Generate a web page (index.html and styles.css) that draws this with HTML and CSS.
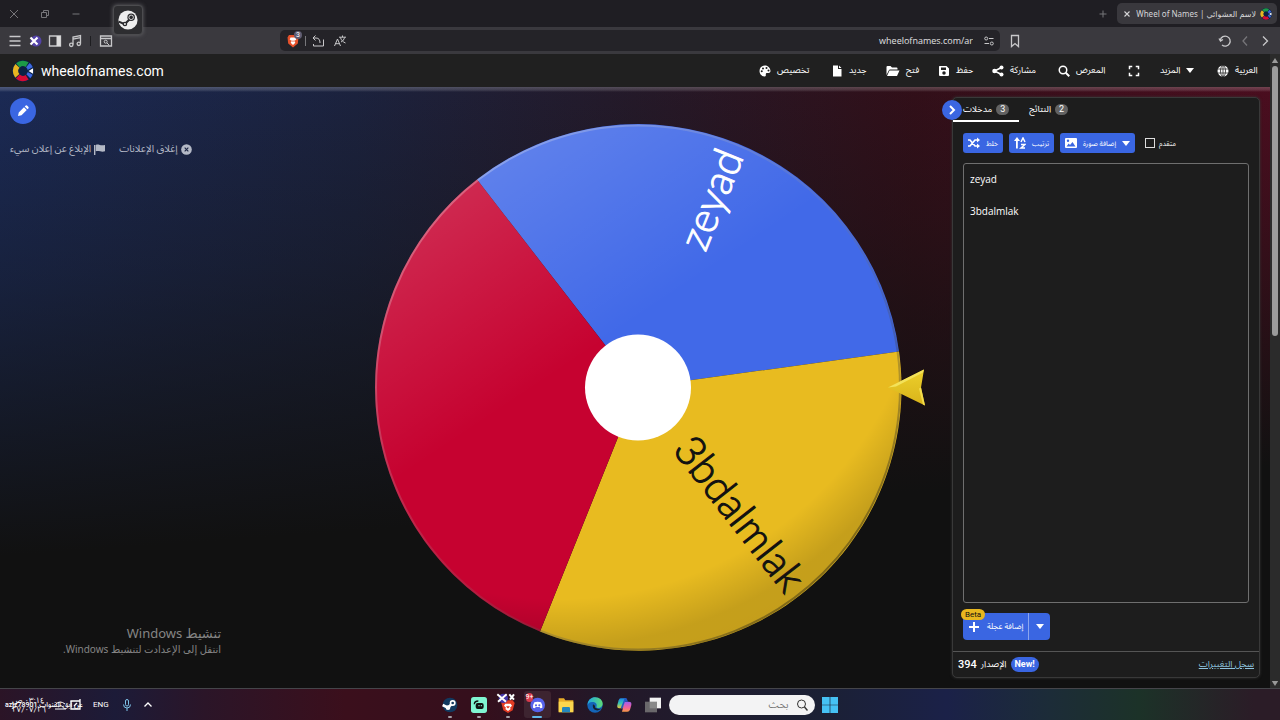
FILE: index.html
```html
<!DOCTYPE html>
<html lang="ar" dir="ltr">
<head>
    <meta charset="UTF-8">
    <meta name="viewport" content="width=device-width, initial-scale=1.0">
    <title>Wheel of Names | عجلة الاسم العشوائي</title>
    <link rel="stylesheet" href="styles.css">
</head>
<body>
    <!-- tab strip -->
    <header class="tabstrip">
        <div class="window-buttons">
            <button aria-label="Close"><svg class="icon" viewBox="0 0 12 12"><path d="M2 2l8 8M10 2l-8 8" class="line"/></svg></button>
            <button aria-label="Restore"><svg class="icon" viewBox="0 0 12 12"><path d="M2.500 4.500h5v5h-5zM4.500 4.500v-2h5v5h-2" class="line"/></svg></button>
            <button aria-label="Minimize"><svg class="icon" viewBox="0 0 12 12"><path d="M2.500 6h7" class="line"/></svg></button>
        </div>
        <div class="tabs-right">
            <button class="new-tab" aria-label="New tab"><svg class="icon" viewBox="0 0 12 12"><path d="M6 2.500v7M2.500 6h7" class="line"/></svg></button>
            <div class="browser-tab">
                <button aria-label="Close tab"><svg class="icon small" viewBox="0 0 12 12"><path d="M3 3l6 6M9 3l-6 6" class="line bold"/></svg></button>
                <span class="tab-title">Wheel of Names | <bdi>لاسم العشوائي</bdi></span>
                <svg class="icon" viewBox="0 0 24 24"><use href="#logo"/></svg>
            </div>
        </div>
    </header>

    <!-- browser toolbar -->
    <div class="toolbar">
        <div class="toolbar-left">
            <button aria-label="Menu"><svg class="icon big" viewBox="0 0 14 14"><path d="M1.500 2.500h11M1.500 7h11M1.500 11.500h11" class="line bold"/></svg></button>
            <button aria-label="Extension"><svg class="icon big" viewBox="0 0 14 14"><circle cx="8" cy="7" r="5.500" fill="#5443a8"/><path d="M2.500 3.500l7 7M2.500 10.500l7-7" stroke="#fff" stroke-width="2.200"/></svg></button>
            <button aria-label="Sidebar"><svg class="icon big" viewBox="0 0 14 14"><path d="M1.500 2h11v10h-11z" class="line bold"/><path d="M8.500 2h4v10h-4z" fill="#ddd"/></svg></button>
            <button aria-label="Music"><svg class="icon big" viewBox="0 0 14 14"><path d="M5 10.500V3l7.500-1.500v8M5 5.200l7.500-1.500" class="line bold"/><circle cx="3.300" cy="10.800" r="1.700" class="line bold"/><circle cx="10.800" cy="9.800" r="1.700" class="line bold"/></svg></button>
            <span class="divider"></span>
            <button aria-label="Search tabs"><svg class="icon big" viewBox="0 0 14 14"><path d="M1.500 2h11v10h-11zM1.500 4.500h11" class="line bold"/><circle cx="6.700" cy="7.700" r="1.500" class="line"/><path d="M8 9l2 2" class="line"/></svg></button>
        </div>
        <div class="address">
            <button class="shield" aria-label="Shields">
                <svg class="icon big" viewBox="0 0 14 14"><path d="M3 1h7l2.500 2.500-.7 6L7 13.500 2.200 9.500l-.7-6z" fill="#e5512b"/><path d="M4.500 3.500h5l.8 2-2 1.500 1 1.800L7 11 4.700 8.800l1-1.800-2-1.500z" fill="#fff"/><path d="M6 6.500l1 1 1-1" stroke="#e5512b" fill="none"/></svg>
                <span class="shield-count">3</span>
            </button>
            <span class="divider light"></span>
            <button aria-label="Share page"><svg class="icon big" viewBox="0 0 14 14"><path d="M4.500 1.500L2 4l2.500 2.500M2.500 4h2.500c3 0 4 2 4 5M12.500 5.500v6.500h-10v-2" class="line"/></svg></button>
            <button class="translate" aria-label="Translate"><svg class="icon big" viewBox="0 0 14 14"><path d="M1.500 12l3-7 3 7M2.500 9.700h4M6 3.200h7M9.500 1.500v1.700M7.500 3.500c.5 2.500 2.500 4.500 5 5.500M11.500 3.500c-.5 2-1.500 3.500-3.500 4.500" class="line"/></svg></button>
            <input class="url" type="text" aria-label="Address" value="wheelofnames.com/ar" readonly>
            <button aria-label="Site settings"><svg class="icon" viewBox="0 0 12 12"><circle cx="3.200" cy="3.500" r="1.500" class="line"/><path d="M6 3.500h4.500M1.500 8.500H6" class="line"/><circle cx="8.800" cy="8.500" r="1.500" class="line"/></svg></button>
        </div>
        <div class="toolbar-right">
            <button aria-label="Bookmark"><svg class="icon big" viewBox="0 0 14 14"><path d="M3.500 1.500h7v11L7 9.500l-3.500 3z" class="line bold"/></svg></button>
            <div class="history">
                <button aria-label="Reload"><svg class="icon big" viewBox="0 0 14 14"><path d="M2.300 6A5 5 0 1 1 4 11M1 4.500L2.500 7 5 5.500" class="line bold"/></svg></button>
                <button class="dim" aria-label="Forward"><svg class="icon big" viewBox="0 0 14 14"><path d="M9 2.500L5 7l4 4.500" class="line bold"/></svg></button>
                <button aria-label="Back"><svg class="icon big" viewBox="0 0 14 14"><path d="M5 2.500L9.500 7 5 11.500" class="line bold"/></svg></button>
            </div>
        </div>
    </div>
    <div class="steam-overlay"><svg viewBox="0 0 24 24"><use href="#steam"/></svg></div>

    <div class="page">
        <div class="content">
            <nav class="site-nav">
                <a class="brand" href="#"><svg viewBox="0 0 24 24"><use href="#logo"/></svg>wheelofnames.com</a>
                <div class="menu">
                    <button><svg class="icon" viewBox="0 0 24 24"><path fill-rule="evenodd" d="M12 1C5.500 1 1 6 1 12s5 11 10 11c2 0 3-1.500 2.700-3-.5-2.500.5-4 2.800-4H19c2.500 0 4-1.500 4-4C23 6 18 1 12 1zM5.500 10.500a2 2 0 1 1 0 4 2 2 0 0 1 0-4zM8 5a2 2 0 1 1 0 4 2 2 0 0 1 0-4zm7-1a2 2 0 1 1 0 4 2 2 0 0 1 0-4zm4 5a2 2 0 1 1 0 4 2 2 0 0 1 0-4z"/></svg>تخصيص</button>
                    <button><svg class="icon" viewBox="0 0 24 24"><path d="M4 1h10v7h7v15H4zM16 1l5 5h-5z"/></svg>جديد</button>
                    <button><svg class="icon wide" viewBox="0 0 28 24"><path d="M1 20V4q0-2 2-2h6l3 3h9q2 0 2 2v2H8q-1.500 0-2.500 2zM2 22l5-11h20l-5 11z"/></svg>فتح</button>
                    <button><svg class="icon" viewBox="0 0 24 24"><path fill-rule="evenodd" d="M3 2h14l5 5v13q0 2-2 2H4q-2 0-2-2V4q0-2 1-2zM6 5v5h10V5zM12 12.500a3.500 3.500 0 1 0 0 7 3.500 3.500 0 0 0 0-7z"/></svg>حفظ</button>
                    <button><svg class="icon" viewBox="0 0 24 24"><circle cx="5" cy="12" r="4.500"/><circle cx="19" cy="5" r="4"/><circle cx="19" cy="19" r="4"/><path d="M19 5L5 12l14 7" fill="none" stroke="#fff" stroke-width="3"/></svg>مشاركة</button>
                    <button><svg class="icon" viewBox="0 0 24 24"><circle cx="10" cy="10" r="7.500" fill="none" stroke="#fff" stroke-width="3"/><path d="M15.500 15.500l7 7" stroke="#fff" stroke-width="4"/></svg>المعرض</button>
                    <button aria-label="ملء الشاشة"><svg class="icon" viewBox="0 0 24 24"><path d="M3 8.500V3h5.500M15.500 3H21v5.500M21 15.500V21h-5.500M8.500 21H3v-5.500" fill="none" stroke="#fff" stroke-width="3"/></svg></button>
                    <button>المزيد<svg class="caret" viewBox="0 0 10 6"><path d="M0 0h10L5 6z"/></svg></button>
                    <button><svg class="icon" viewBox="0 0 24 24"><circle cx="12" cy="12" r="11"/><path d="M1 8h22M1 16h22M12 1v22" stroke="#202020" stroke-width="1.500"/><ellipse cx="12" cy="12" rx="5" ry="11" fill="none" stroke="#202020" stroke-width="1.500"/></svg>العربية</button>
                </div>
            </nav>

            <main class="stage">
                <section class="left">
                    <button class="edit" aria-label="تعديل"><svg viewBox="0 0 24 24"><path d="M2 22l1.500-7L14 4.500l5.500 5.500L9 20.500zM15.500 3l2-2q1.500-1 3 .5l2 2q1.500 1.500.5 3l-2 2z"/></svg></button>
                    <div class="ad-links">
                        <a href="#">الإبلاغ عن إعلان سيء<svg class="icon" viewBox="0 0 12 12"><path d="M0 1h1.500v11H0zM2 1c3-1.500 5 1.500 10 0v7c-4 1.500-6-1-10 0z"/></svg></a>
                        <a href="#">إغلاق الإعلانات<svg class="icon" viewBox="0 0 12 12"><circle cx="6" cy="6" r="5.800"/><path d="M4 4l4 4M8 4L4 8" stroke="#1b2442" stroke-width="1.200"/></svg></a>
                    </div>
                    <div class="activate" dir="rtl">
                        <p class="activate-title">تنشيط Windows</p>
                        <p>انتقل إلى الإعدادت لتنشيط Windows.</p>
                    </div>
                </section>

                <svg class="wheel" viewBox="0 0 580 600" role="img" aria-label="zeyad, 3bdalmlak">
                    <defs>
                        <linearGradient id="shine" x1="0.200" y1="0.050" x2="0.800" y2="0.950">
                            <stop offset="0" stop-color="#fff" stop-opacity=".17"/>
                            <stop offset=".4" stop-color="#fff" stop-opacity="0"/>
                        </linearGradient>
                        <radialGradient id="shade" cx="0.350" cy="0.200" r="0.900">
                            <stop offset=".78" stop-color="#000" stop-opacity="0"/>
                            <stop offset=".88" stop-color="#000" stop-opacity=".15"/>
                            <stop offset="1" stop-color="#000" stop-opacity=".16"/>
                        </radialGradient>
                        <linearGradient id="rim" x1="0" y1="0" x2="1" y2="1">
                            <stop offset=".1" stop-color="#fff" stop-opacity=".3"/>
                            <stop offset=".5" stop-color="#888" stop-opacity=".2"/>
                            <stop offset=".9" stop-color="#000" stop-opacity=".4"/>
                        </linearGradient>
                        <linearGradient id="gold" x1="0" y1="0" x2="0" y2="1">
                            <stop offset="0" stop-color="#ecd02c"/>
                            <stop offset="1" stop-color="#d9b31a"/>
                        </linearGradient>
                    </defs>
                    <g transform="translate(293 300)">
                        <path d="M0 0L-161 -208A263 263 0 0 1 261 -36z" fill="#4169e8"/>
                        <path d="M0 0L261 -36A263 263 0 0 1 -98 244z" fill="#e8bb20"/>
                        <path d="M0 0L-98 244A263 263 0 0 1 -161 -208z" fill="#c60230"/>
                        <circle r="263" fill="url(#shine)"/>
                        <circle r="263" fill="url(#shade)"/>
                        <circle r="262" fill="none" stroke="url(#rim)" stroke-width="2"/>
                        <text class="slice light" transform="rotate(-68)" x="254" y="12">zeyad</text>
                        <text class="slice dark" transform="rotate(52)" x="254" y="12">3bdalmlak</text>
                        <circle r="53" fill="#fff"/>
                        <path d="M250 0L286 -18L283 0L287 18z" fill="url(#gold)"/>
                        <path d="M250 0L286 -18L285 -15L258 -1z" fill="#f3e25a"/>
                        <path d="M283 0l4 18-2-1-4-16z" fill="#f3dd4d"/>
                    </g>
                </svg>

                <section class="right">
                    <aside class="panel">
                        <button class="collapse" aria-label="إخفاء"><svg class="icon" viewBox="0 0 12 12"><path d="M4 2l4 4-4 4" class="line thick"/></svg></button>
                        <div class="panel-tabs">
                            <button class="active">مدخلات<span class="count">3</span></button>
                            <button>النتائج<span class="count">2</span></button>
                        </div>
                        <div class="panel-body">
                            <div class="tools">
                                <button class="btn"><svg class="icon" viewBox="0 0 12 12"><path d="M0 3h2l5 6h3M0 9h2l5-6h3" fill="none" stroke="#fff" stroke-width="1.600"/><path d="M9 .500L12 3 9 5.500zM9 6.500L12 9l-3 2.500z"/></svg>خلط</button>
                                <button class="btn"><svg class="icon" viewBox="0 0 12 12"><path d="M2 4h1.800v7.500H2zM3 0L0 4h6z"/><path d="M7 5l2-4 2 4M7 7.500h4l-4 3.500h4" fill="none" stroke="#fff" stroke-width="1.500"/></svg>ترتيب</button>
                                <button class="btn"><svg class="icon" viewBox="0 0 12 12"><path fill-rule="evenodd" d="M1 1h10q1 0 1 1v8q0 1-1 1H1q-1 0-1-1V2q0-1 1-1zM1.500 9.500h9L7.500 5 5 8 3.700 6.500zM3 2.500a1.200 1.200 0 1 0 0 2.400 1.200 1.200 0 0 0 0-2.400z"/></svg>إضافة صورة<svg class="caret" viewBox="0 0 10 6"><path d="M0 0h10L5 6z"/></svg></button>
                                <label class="advanced"><input type="checkbox">متقدم</label>
                            </div>
                            <textarea class="entries" aria-label="مدخلات" spellcheck="false">zeyad

3bdalmlak</textarea>
                            <div class="add-wheel">
                                <button class="add"><svg class="icon" viewBox="0 0 12 12"><path d="M6 1v10M1 6h10" class="line thick"/></svg>إضافة عجلة</button>
                                <button class="more" aria-label="المزيد"><svg class="caret" viewBox="0 0 10 6"><path d="M0 0h10L5 6z"/></svg></button>
                                <span class="beta">Beta</span>
                            </div>
                        </div>
                        <footer class="version">
                            <b>394</b><span class="version-word">الإصدار</span><span class="new">New!</span>
                            <a href="#">سجل التغييرات</a>
                        </footer>
                    </aside>
                </section>
            </main>
        </div>
        <div class="scrollbar">
            <svg viewBox="0 0 10 6"><path d="M5 0l4 6H1z"/></svg>
            <span class="thumb"></span>
            <svg viewBox="0 0 10 6"><path d="M1 0h8L5 6z"/></svg>
        </div>
    </div>

    <!-- taskbar -->
    <div class="taskbar">
        <div class="tray">
            <div class="clock">
                <span>٠٣:١٤ ص</span>
                <span>٢٧/٠٧/٢٦</span>
                <span class="caption">azjz78901 <bdi>عن آبق القنوات</bdi></span>
                <svg class="tray-icons" viewBox="0 0 30 12"><path d="M2 5q4-4 9 0M4 8q3-3 5 0M1 10h11" class="line"/><path d="M17 2h9v8h-9zM20 7l3-3M26 0v4" class="line bold"/></svg>
            </div>
            <span class="lang">ENG</span>
            <svg class="icon" viewBox="0 0 12 12"><rect x="4.500" y="0.500" width="3" height="6.500" rx="1.500" fill="none" stroke="#7fc4ea"/><path d="M2.500 5.500q0 3.500 3.500 3.500t3.500-3.500M6 9v3" fill="none" stroke="#7fc4ea"/></svg>
            <button aria-label="Hidden icons"><svg class="icon" viewBox="0 0 12 12"><path d="M2.500 7.500L6 4l3.500 3.500" class="line bold"/></svg></button>
        </div>
        <div class="apps">
            <button class="app open" aria-label="Steam"><svg viewBox="0 0 24 24"><circle cx="12" cy="12" r="11" fill="#12395f"/><path d="M1 12l8 4 6-6" stroke="#fff" stroke-width="4" fill="none"/><circle cx="16" cy="9" r="4.500" fill="#fff"/><circle cx="16" cy="9" r="2" fill="#12395f"/><circle cx="9" cy="16" r="3.500" fill="#fff"/></svg></button>
            <button class="app open" aria-label="Streamlabs"><svg viewBox="0 0 24 24"><rect width="24" height="24" rx="4" fill="#80f5d2"/><path d="M5 11q0-5 6-5" fill="none" stroke="#111" stroke-width="2"/><rect x="7" y="9" width="12" height="9" rx="3" fill="#111"/><path d="M12 12v2M15.500 12v2" stroke="#80f5d2" stroke-width="1.600"/></svg></button>
            <button class="app open" aria-label="Brave"><svg viewBox="0 0 24 24"><path d="M5 5h14l3 4-3 11-7 4-7-4L2 9z" fill="#e33b24"/><path d="M8 10h8l2 3-3 3 1 2-4 3-4-3 1-2-3-3z" fill="#fff"/><path d="M10 14l2 2 2-2" stroke="#e33b24" stroke-width="2" fill="none"/><circle cx="5" cy="2" r="7" fill="#4436a8"/><path d="M-4 -4l13 11M-3 7L10 -4M14 -4l7 8M21 -4l-6 8" stroke="#fff" stroke-width="3"/></svg></button>
            <button class="app open current" aria-label="Discord"><svg viewBox="0 0 24 24"><circle cx="13" cy="12" r="11" fill="#5662ea"/><path d="M8 8q5-2 10 0 2.500 4 2 8l-3 1-1-2h-6l-1 2-3-1q-.5-4 2-8z" fill="#fff"/><circle cx="10.500" cy="12.500" r="1.600" fill="#5662ea"/><circle cx="15.500" cy="12.500" r="1.600" fill="#5662ea"/></svg><span class="unread">9+</span></button>
            <button class="app" aria-label="File Explorer"><svg viewBox="0 0 24 24"><path d="M1 2h8l2 3h12v17H1z" fill="#e9ad28"/><path d="M1 7h22v16H1z" fill="#fbd64e"/><path d="M6 23v-6q0-2 2-2h8q2 0 2 2v6z" fill="#2386bd"/></svg></button>
            <button class="app" aria-label="Edge"><svg viewBox="0 0 24 24"><defs><linearGradient id="edge"><stop offset="0" stop-color="#20a8e0"/><stop offset="1" stop-color="#5edb76"/></linearGradient></defs><circle cx="12" cy="12" r="11.500" fill="#1465b8"/><path d="M1 10C2 4 7 .500 12 .500c7 0 12 5 11.500 10.500-.5 4-4 6-7.500 5.500-2.500-.5-2-2-1.500-3.500C15 9 11 7 7.500 7.500 4 8 2 9 1 12z" fill="url(#edge)"/><path d="M9 11q-2 7 5 9 4 1 8-3-4 2-8 0-3-1-2-4z" fill="#17212d"/></svg></button>
            <button class="app" aria-label="Copilot"><svg viewBox="0 0 24 24"><defs><linearGradient id="cop1" x2="0" y2="1"><stop offset="0" stop-color="#1e86e8"/><stop offset=".5" stop-color="#37c5b0"/><stop offset="1" stop-color="#f5c635"/></linearGradient><linearGradient id="cop2" x2="0" y2="1"><stop offset="0" stop-color="#a35cf0"/><stop offset=".6" stop-color="#f2619a"/><stop offset="1" stop-color="#f79a45"/></linearGradient></defs><path d="M7 2h8l-4 15H5q-4 0-3-5l2-7q1-3 3-3z" fill="url(#cop1)"/><path d="M13 7h6q5 0 4 5l-2 7q-1 3-4 3H9z" fill="url(#cop2)"/><path d="M13 2h3l2 5h-5l-3 10H7z" fill="#2457c5"/></svg></button>
            <button class="app" aria-label="Task view"><svg viewBox="0 0 24 24"><path d="M7 1h17v16H7z" fill="#f2f2f2"/><path d="M0 7h18v16H0z" fill="#777" opacity=".85"/></svg></button>
            <label class="search">
                <input type="text" placeholder="بحث" aria-label="بحث" dir="rtl">
                <svg class="icon" viewBox="0 0 12 12"><circle cx="5.500" cy="5" r="4" fill="none" stroke="#333"/><path d="M8.500 8l3 3.500" stroke="#333" stroke-width="1.400"/></svg>
            </label>
            <button class="app start" aria-label="Start"><svg viewBox="0 0 24 24"><path d="M0 0h11.500v11.500H0zM12.500 0H24v11.500H12.500zM0 12.500h11.500V24H0zM12.500 12.500H24V24H12.500z" fill="#45c1f3"/></svg></button>
        </div>
    </div>

    <svg class="symbols" aria-hidden="true">
        <symbol id="logo" viewBox="0 0 24 24">
            <circle cx="12" cy="12" r="12" fill="#0c2144"/>
            <g fill="none" stroke-width="6">
                <path d="M6.500 5.900A8.200 8.200 0 0 1 16.500 5.100" stroke="#1c9b48"/>
                <path d="M5.800 17.300A8.200 8.200 0 0 1 6 6.500" stroke="#e8b521"/>
                <path d="M16.500 18.800A8.200 8.200 0 0 1 6.300 17.900" stroke="#d50b35"/>
                <path d="M17.300 5.700A8.200 8.200 0 0 1 17.800 17.800" stroke="#3d68e0"/>
            </g>
            <path d="M15 12l9-5v10z" fill="#0c2144"/>
            <path d="M18 12l5-3v6z" fill="#fff"/>
        </symbol>
        <symbol id="steam" viewBox="0 0 24 24">
            <circle cx="12" cy="12" r="11.500" fill="#eee"/>
            <path d="M1 14l7 3 6-6" fill="none" stroke="#2a2a2d" stroke-width="2.500"/>
            <circle cx="15.800" cy="8.800" r="4.500" fill="#2a2a2d"/>
            <circle cx="15.800" cy="8.800" r="2.700" fill="none" stroke="#eee"/>
            <circle cx="8.300" cy="16.800" r="2.800" fill="#2a2a2d"/>
            <circle cx="8.300" cy="16.800" r="1.200" fill="#eee"/>
        </symbol>
    </svg>
</body>
</html>
```
FILE: styles.css
```css
* {
    box-sizing: border-box;
}
body {
    margin: 0;
    height: 100vh;
    display: flex;
    flex-direction: column;
    overflow: hidden;
    background: #111;
    color: #fff;
    font-family: Roboto, "Noto Sans Arabic", "DejaVu Sans", sans-serif;
    font-size: 10px;
}
button {
    display: flex;
    align-items: center;
    justify-content: center;
    padding: 0;
    border: none;
    background: none;
    color: inherit;
    font: inherit;
    white-space: nowrap;
    cursor: pointer;
}
a {
    color: inherit;
    text-decoration: none;
}
svg {
    display: block;
    flex-shrink: 0;
    fill: currentColor;
}
.symbols {
    position: absolute;
    width: 0;
    height: 0;
}
.icon {
    width: 12px;
    height: 12px;
}
.icon.small {
    width: 10px;
    height: 10px;
}
.icon.big {
    width: 14px;
    height: 14px;
}
.icon.wide {
    width: 14px;
}
.caret {
    width: 8px;
    height: 5px;
}
.line {
    fill: none;
    stroke: currentColor;
}
.line.bold {
    stroke-width: 1.3;
}
.line.thick {
    stroke-width: 2;
}

/* browser */
.tabstrip {
    display: flex;
    justify-content: space-between;
    height: 27px;
    padding: 0 3px 0 8px;
    background: #1f1e23;
    color: #77767a;
}
.window-buttons {
    display: flex;
    gap: 19px;
}
.tabs-right {
    display: flex;
    align-items: center;
    gap: 8px;
}
.browser-tab {
    display: flex;
    align-items: center;
    gap: 4px;
    height: 21px;
    padding: 0 5px;
    border-radius: 5px;
    background: #39383d;
    color: #d5d5d7;
}
.tab-title {
    min-width: 116px;
    white-space: nowrap;
    font-family: "Noto Sans", "DejaVu Sans", sans-serif;
    font-size: 8px;
}
.toolbar {
    display: grid;
    grid-template-columns: 280px 1fr 280px;
    align-items: center;
    height: 27px;
    background: #3a393e;
    color: #c8c8ca;
}
.toolbar-left {
    display: flex;
    align-items: center;
    gap: 6px;
    padding-left: 8px;
}
.divider {
    width: 1px;
    height: 10px;
    margin: 0 2px;
    background: #1d1d20;
}
.divider.light {
    margin: 0 1px;
    background: #77777b;
}
.address {
    display: flex;
    align-items: center;
    gap: 4px;
    height: 21px;
    padding: 0 5px 0 6px;
    border-radius: 5px;
    background: #242328;
}
.shield {
    position: relative;
}
.shield-count {
    position: absolute;
    top: -3px;
    right: -2px;
    padding: 0 2px;
    border-radius: 4px;
    background: #5e5d72;
    color: #fff;
    font-size: 7px;
    line-height: 8px;
}
.translate {
    margin-left: 4px;
}
.url {
    flex: 1;
    min-width: 0;
    padding: 0;
    border: none;
    background: none;
    color: #e0e0e2;
    font-family: "Open Sans", sans-serif;
    font-size: 9px;
    text-align: right;
}
.address button:last-child {
    margin: 0 0 0 6px;
}
.toolbar-right {
    display: flex;
    justify-content: space-between;
    padding: 0 8px;
}
.history {
    display: flex;
    gap: 6px;
}
.dim {
    color: #77767a;
}
.steam-overlay {
    position: absolute;
    left: 113px;
    top: 5px;
    padding: 4px;
    border: 1px solid #4c4c4f;
    border-radius: 4px;
    background: #2d2d30;
    box-shadow: 0 0 4px #66666a;
}
.steam-overlay svg {
    width: 20px;
    height: 20px;
}

/* page */
.page {
    flex: 1;
    min-height: 0;
    display: flex;
}
.content {
    flex: 1;
    min-width: 0;
    display: flex;
    flex-direction: column;
}
.scrollbar {
    display: flex;
    flex-direction: column;
    align-items: center;
    gap: 3px;
    width: 10px;
    padding: 4px 0 2px;
    background: #2b2b2b;
    color: #999;
}
.scrollbar svg {
    width: 8px;
    height: 5px;
}
.scrollbar svg:last-child {
    margin-top: auto;
}
.thumb {
    width: 6px;
    height: 43%;
    border-radius: 3px;
    background: #9b9b9b;
}
.site-nav {
    display: flex;
    align-items: center;
    justify-content: space-between;
    height: 33px;
    padding: 0 8px 0 12px;
    background: #202020;
}
.brand {
    display: flex;
    align-items: center;
    gap: 7px;
    font-size: 14px;
}
.brand svg {
    width: 22px;
    height: 22px;
}
.menu {
    display: grid;
    grid-template-columns: 72px 55px 52px 54px 66px 70px 32px 57px 45px;
}
.menu button {
    justify-content: flex-start;
    gap: 6px;
    font-size: 9px;
}
.stage {
    flex: 1;
    min-height: 0;
    display: grid;
    grid-template-columns: 1fr 580px 1fr;
    grid-template-rows: 100%;
    background:
        linear-gradient(180deg, rgba(255, 255, 255, .22) 0, rgba(255, 255, 255, .14) 3px, rgba(255, 255, 255, 0) 5px),
        linear-gradient(176deg, rgba(17, 17, 17, 0) 0, rgba(17, 17, 17, .35) 28%, #111 68%),
        linear-gradient(90deg, #1b2a55, #1c2340 28%, #261a2b 50%, #360f1a 72%, #560d22);
}
.left {
    display: flex;
    flex-direction: column;
    align-items: flex-start;
    padding: 11px 10px 32px;
}
.edit {
    width: 26px;
    height: 26px;
    border-radius: 50%;
    background: #3a66e2;
}
.edit svg {
    width: 12px;
    height: 12px;
}
.ad-links {
    display: flex;
    gap: 14px;
    margin-top: 18px;
    color: #b4b9c6;
    font-size: 10px;
}
.ad-links a {
    display: flex;
    align-items: center;
    gap: 3px;
    line-height: 14px;
    white-space: nowrap;
}
.ad-links .icon {
    width: 11px;
    height: 11px;
}
.activate {
    width: 211px;
    margin-top: auto;
    color: #858585;
    font-family: "Noto Sans", "DejaVu Sans", sans-serif;
    white-space: nowrap;
}
.activate p {
    margin: 0;
    line-height: 14px;
}
.activate .activate-title {
    font-size: 13px;
    line-height: 18px;
}
.wheel {
    width: 100%;
    height: 100%;
    overflow: visible;
}
.slice {
    font-family: Lato, sans-serif;
    font-size: 42px;
    font-weight: 300;
    text-anchor: end;
}
.slice.light {
    fill: #fff;
    stroke: #fff;
}
.slice.dark {
    fill: #111;
    stroke: #111;
}
.right {
    display: flex;
    justify-content: flex-end;
    padding: 10px 10px 10px 0;
}
.panel {
    position: relative;
    display: flex;
    flex-direction: column;
    width: 308px;
    border: 1px solid #393939;
    border-radius: 5px;
    background: #1d1d1d;
    box-shadow: 0 0 3px #333;
}
.collapse {
    position: absolute;
    left: -11px;
    top: 2px;
    width: 20px;
    height: 20px;
    border-radius: 50%;
    background: #3a66e2;
}
.panel-tabs {
    display: flex;
    height: 24px;
}
.panel-tabs button {
    gap: 4px;
    padding: 0 10px;
    border-bottom: 2px solid transparent;
    font-size: 9px;
}
.panel-tabs .active {
    border-color: #fff;
}
.count {
    padding: 0 4px;
    border-radius: 6px;
    background: #626262;
    font-size: 9px;
    line-height: 11px;
}
.panel-body {
    flex: 1;
    min-height: 0;
    display: flex;
    flex-direction: column;
    gap: 10px;
    padding: 11px 10px;
}
.tools {
    display: flex;
    gap: 6px;
    height: 20px;
}
.btn {
    gap: 6px;
    padding: 0 5px;
    border-radius: 3px;
    background: #3a66e2;
    font-size: 7px;
}
.advanced {
    display: flex;
    align-items: center;
    gap: 4px;
    margin-left: 4px;
    font-size: 7px;
}
.advanced input {
    width: 10px;
    height: 10px;
    margin: 0;
    border: 1px solid #ddd;
    appearance: none;
}
.entries {
    flex: 1;
    padding: 7px 6px;
    border: 1px solid #6f6f6f;
    border-radius: 3px;
    background: #1d1d1d;
    color: #fff;
    font-family: "Open Sans", sans-serif;
    font-size: 10px;
    font-weight: 500;
    line-height: 16px;
    resize: none;
}
.add-wheel {
    position: relative;
    display: flex;
    align-self: flex-start;
    height: 27px;
    border-radius: 4px;
    background: #3a66e2;
}
.add {
    gap: 7px;
    padding: 0 5px;
    font-size: 8px;
}
.more {
    width: 22px;
    border-left: 1px solid #8ba5ee;
}
.beta {
    position: absolute;
    left: -2px;
    top: -4px;
    padding: 0 4px;
    border-radius: 6px;
    background: #e8b71f;
    color: #111;
    font-size: 8px;
    line-height: 11px;
}
.version {
    display: flex;
    align-items: center;
    gap: 4px;
    height: 26px;
    padding: 0 5px;
    border-top: 1px solid #555;
    font-size: 9px;
}
.version b {
    font-size: 11px;
    font-weight: 500;
}
.new {
    padding: 0 4px;
    border-radius: 8px;
    background: #3a66e2;
    font-size: 9px;
    font-weight: bold;
    line-height: 15px;
}
.version a {
    margin-left: auto;
    color: #8ec3dd;
    text-decoration: underline;
}

/* taskbar */
.taskbar {
    display: grid;
    grid-template-columns: 1fr auto 1fr;
    height: 32px;
    border-top: 1px solid #45454a;
    background: linear-gradient(90deg, #2b1426, #1c1b38 9%, #2b1528 16%, #3b0f1c 27%, #340f1c 38%, #241727 46%, #1b2034 64%, #1b2148 74%, #1c2c38 82%, #1c3228 89%, #2b1c27 98%);
}
.tray {
    display: flex;
    align-items: center;
    gap: 9px;
    padding-left: 5px;
}
.clock {
    position: relative;
    display: flex;
    flex-direction: column;
    width: 79px;
    padding-left: 7px;
    font-size: 8px;
    line-height: 9px;
}
.caption {
    position: absolute;
    left: 0;
    top: 5px;
    font-size: 7px;
    font-weight: 500;
    white-space: nowrap;
}
.tray-icons {
    position: absolute;
    left: 49px;
    top: 3px;
    width: 30px;
    height: 12px;
}
.lang {
    margin-right: 3px;
    font-size: 8px;
}
.apps {
    display: flex;
    align-items: center;
    gap: 2px;
}
.app {
    position: relative;
    width: 27px;
    height: 27px;
    border-radius: 3px;
}
.app svg {
    width: 16px;
    height: 16px;
    overflow: visible;
}
.app.open::after {
    content: "";
    position: absolute;
    bottom: 0;
    left: 50%;
    width: 4px;
    height: 2px;
    margin-left: -2px;
    border-radius: 1px;
    background: #a5a1a7;
}
.app.current {
    background: #3d2430;
}
.app.current::after {
    width: 10px;
    margin-left: -5px;
    background: #60b9e8;
}
.unread {
    position: absolute;
    left: 2px;
    top: 2px;
    border-radius: 5px;
    background: #d83a4c;
    font-size: 7px;
    line-height: 9px;
}
.search {
    display: flex;
    align-items: center;
    gap: 7px;
    width: 146px;
    height: 20px;
    padding: 0 7px;
    border-radius: 10px;
    background: #f3f3f4;
}
.search input {
    flex: 1;
    min-width: 0;
    padding: 0;
    border: none;
    background: none;
    font: inherit;
}
.search input::placeholder {
    color: #777;
}
```
